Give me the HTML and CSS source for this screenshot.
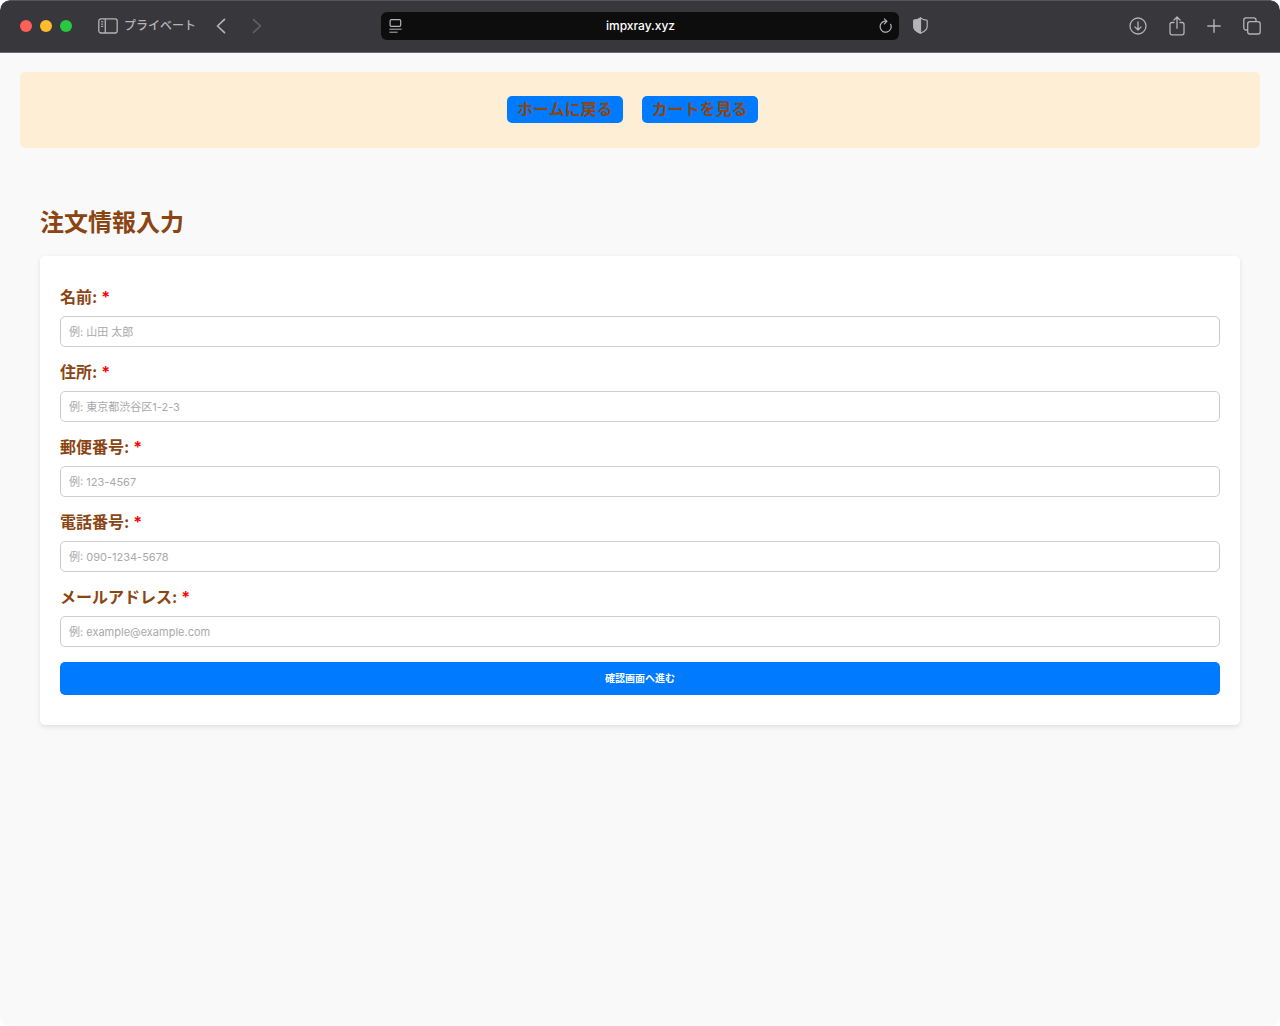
FILE: index.html
```html
<!DOCTYPE html>
<html lang="ja">
<head>
<meta charset="utf-8">
<meta name="viewport" content="width=device-width, initial-scale=1">
<title>注文情報入力</title>
<link rel="stylesheet" href="styles.css">
</head>
<body>
<div class="window">
  <div class="toolbar">
    <div class="tools tools-left">
      <div class="lights"><span class="light red"></span><span class="light yellow"></span><span class="light green"></span></div>
      <button class="tool sidebar" type="button">
        <svg width="20" height="16" viewBox="0 0 20 16" fill="none" stroke="currentColor" stroke-width="1.3"><rect x=".8" y=".8" width="18.4" height="14.2" rx="2.2"/><path d="M7.3 1v14"/><path d="M3 3.8h2.3M3 6.1h2.3M3 8.4h2.3" stroke-width="1"/></svg>
        <span>プライベート</span>
      </button>
      <button class="tool" type="button" aria-label="戻る"><svg width="10" height="16" viewBox="0 0 10 16" fill="none" stroke="currentColor" stroke-width="1.7" stroke-linecap="round" stroke-linejoin="round"><path d="M8.5 1.3 1.5 8l7 6.7"/></svg></button>
      <button class="tool forward" type="button" aria-label="進む" disabled><svg width="10" height="16" viewBox="0 0 10 16" fill="none" stroke="currentColor" stroke-width="1.6" stroke-linecap="round" stroke-linejoin="round"><path d="m1.5 1.6 7 6.4-7 6.4"/></svg></button>
    </div>
    <div class="address">
      <button class="tool" type="button" aria-label="ページ設定"><svg width="13" height="14" viewBox="0 0 13 14" fill="none" stroke="currentColor" stroke-width="1.2" stroke-linecap="round"><rect x="1.1" y=".7" width="10.6" height="6.6" rx="1.3"/><path d="M.8 10.2h11.4M.8 13.2h7.4" stroke-width="1"/></svg></button>
      <span class="url">impxray.xyz</span>
      <button class="tool" type="button" aria-label="再読み込み"><svg width="13" height="15" viewBox="0 0 13 15" fill="none" stroke="currentColor" stroke-width="1.2" stroke-linecap="round" stroke-linejoin="round"><path d="M11.6 6.3A5.5 5.5 0 1 1 6.5 3.2h1.1"/><path d="M5.4.8l2.5 2.5-2.5 2.6"/></svg></button>
    </div>
    <div class="tools tools-right">
      <button class="tool" type="button" aria-label="プライバシーレポート"><svg width="15" height="17" viewBox="0 0 15 17" fill="none" stroke="currentColor" stroke-width="1.2" stroke-linejoin="round"><path d="M7.5.9c1.8 1.3 3.7 2 6 2.3.5 0 .7.3.7.7v5.6c0 3.2-2.8 5-6.7 6.7-3.9-1.7-6.7-3.500-6.700-6.700V3.900c0-.4.2-.7.7-.7 2.300-.3 4.200-1 6-2.300z"/><path d="M7.500.9v15.300c-3.900-1.700-6.700-3.500-6.700-6.700V3.900c0-.4.2-.7.7-.7 2.300-.3 4.200-1 6-2.300z" fill="currentColor"/></svg></button>
      <div class="actions">
        <button class="tool" type="button" aria-label="ダウンロード"><svg width="18" height="18" viewBox="0 0 18 18" fill="none" stroke="currentColor" stroke-width="1.3" stroke-linecap="round" stroke-linejoin="round"><circle cx="9" cy="9" r="8"/><path d="M9 4.800v8M5.900 9.900 9 13l3.100-3.100"/></svg></button>
        <button class="tool share" type="button" aria-label="共有"><svg width="16" height="20" viewBox="0 0 16 20" fill="none" stroke="currentColor" stroke-width="1.3" stroke-linecap="round" stroke-linejoin="round"><path d="M5 6.500H3A2 2 0 0 0 1 8.500v8.300a2 2 0 0 0 2 2h10a2 2 0 0 0 2-2V8.500a2 2 0 0 0-2-2h-2M8 12.300V1.200M5 4l3-3 3 3"/></svg></button>
        <button class="tool" type="button" aria-label="新規タブ"><svg width="14" height="14" viewBox="0 0 14 14" fill="none" stroke="currentColor" stroke-width="1.4" stroke-linecap="round"><path d="M7 .8v12.400M.8 7h12.400"/></svg></button>
        <button class="tool" type="button" aria-label="タブの概要"><svg width="18" height="18" viewBox="0 0 18 18" fill="none" stroke="currentColor" stroke-width="1.3" stroke-linejoin="round"><rect x="4.700" y="4.700" width="12.500" height="12.300" rx="2.200"/><path d="M4.700 13H3a2.200 2.200 0 0 1-2.200-2.200V3A2.200 2.200 0 0 1 3 .8h7.800A2.200 2.200 0 0 1 13 3v1.700"/></svg></button>
      </div>
    </div>
  </div>

  <header class="site-header">
    <nav class="nav">
      <a class="nav-link" href="#home">ホームに戻る</a>
      <a class="nav-link" href="#cart">カートを見る</a>
    </nav>
  </header>

  <main class="content">
    <h1 class="title">注文情報入力</h1>
    <form class="card">
      <div class="field">
        <label for="name">名前: <span class="required">*</span></label>
        <input id="name" type="text" placeholder="例: 山田 太郎" required>
      </div>
      <div class="field">
        <label for="address">住所: <span class="required">*</span></label>
        <input id="address" type="text" placeholder="例: 東京都渋谷区1-2-3" required>
      </div>
      <div class="field">
        <label for="postal">郵便番号: <span class="required">*</span></label>
        <input id="postal" type="text" placeholder="例: 123-4567" required>
      </div>
      <div class="field">
        <label for="phone">電話番号: <span class="required">*</span></label>
        <input id="phone" type="tel" placeholder="例: 090-1234-5678" required>
      </div>
      <div class="field">
        <label for="email">メールアドレス: <span class="required">*</span></label>
        <input id="email" type="email" placeholder="例: example@example.com" required>
      </div>
      <button class="submit" type="submit">確認画面へ進む</button>
    </form>
  </main>
</div>
</body>
</html>
```
FILE: styles.css
```css
* { box-sizing: border-box; }

html { background: #fff; }

body {
  margin: 0;
  color: #8b4513;
  font: 16px/24px "Inter", "Noto Sans CJK JP", sans-serif;
}

button, input { font-family: inherit; }

svg { display: block; }

.window {
  min-height: 100vh;
  overflow: hidden;
  border-radius: 10px;
  background: #f9f9f9;
}

/* Browser toolbar */
.toolbar {
  display: grid;
  grid-template-columns: 1fr minmax(0, 518px) 1fr;
  align-items: center;
  height: 53px;
  padding-bottom: 2px;
  border-top: 1px solid #55555a;
  border-bottom: 1px solid #6b6a6e;
  border-radius: 10px 10px 0 0;
  background: #38373b;
}

.tools { display: flex; align-items: center; }
.tools-left { padding-left: 20px; }
.tools-right { justify-content: space-between; padding: 0 19px 0 14px; }

.lights { display: flex; gap: 8px; margin-right: 26px; }
.light { width: 12px; height: 12px; border-radius: 50%; }
.red { background: #ff5f57; }
.yellow { background: #febc2e; }
.green { background: #28c840; }

.tool {
  display: flex;
  align-items: center;
  padding: 0;
  border: 0;
  background: none;
  color: #b4b3b8;
}

.sidebar {
  gap: 6px;
  margin-right: 20px;
  font-size: 12px;
  font-weight: 500;
  line-height: 20px;
}

.forward { margin-left: 26px; color: #626166; }

.actions { display: flex; align-items: center; gap: 22px; }

.address {
  display: flex;
  align-items: center;
  justify-content: space-between;
  height: 28px;
  padding: 0 7px 0 8px;
  border-radius: 6px;
  background: #0d0d0e;
}

.url {
  color: #fff;
  font-size: 12px;
  font-weight: 500;
  line-height: 20px;
}

/* Shop page */
.site-header {
  margin: 19px 20px 0;
  padding: 24px 20px 25px;
  border-radius: 5px;
  background: #ffeed6;
}

.nav { display: flex; justify-content: center; gap: 19px; padding-right: 15px; }

.nav-link {
  padding: 0 10px;
  border-radius: 5px;
  background: #007bff;
  color: #8b4513;
  font-weight: 700;
  line-height: 27px;
  text-decoration: none;
}

.content { padding: 57px 40px 40px; }

.title {
  margin: 0 0 15px;
  font-size: 24px;
  font-weight: 700;
  line-height: 36px;
}

.card {
  padding: 31px 20px 30px;
  border-radius: 5px;
  background: #fff;
  box-shadow: 0 2px 5px rgba(0, 0, 0, 0.1);
}

.field { margin-bottom: 15px; }

.field label {
  display: block;
  margin-bottom: 9px;
  font-weight: 700;
  line-height: 20px;
}

.required { color: #f00; }

.field input {
  display: block;
  width: 100%;
  height: 31px;
  padding: 0 8px;
  border: 1px solid #ccc;
  border-radius: 5px;
  background: #fff;
  color: #333;
  font-size: 11px;
}

.field input::placeholder { color: #a9a9a9; }

.submit {
  display: block;
  width: 100%;
  padding: 6px 20px;
  border: 0;
  border-radius: 5px;
  background: #007bff;
  color: #fff;
  font-size: 10px;
  font-weight: 700;
  line-height: 21px;
}
```
